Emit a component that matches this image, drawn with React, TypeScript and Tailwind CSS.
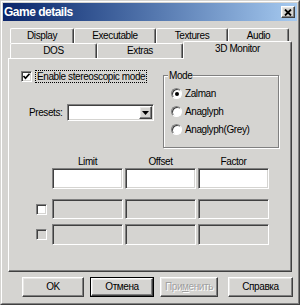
import React from "react";

const BG = "bg-[#d5d4d1]";
const raised =
  "border border-t-white border-l-white border-r-[#404040] border-b-[#404040] shadow-[inset_-1px_-1px_0_#808080,inset_1px_1px_0_#e8e7e5]";
const sunken =
  "border border-t-[#808080] border-l-[#808080] border-r-white border-b-white shadow-[inset_1px_1px_0_#404040,inset_-1px_-1px_0_#d5d4d1]";

function Check({ checked, disabled }: { checked?: boolean; disabled?: boolean }) {
  return (
    <div className={`w-[11px] h-[11px] shrink-0 flex items-center justify-center ${sunken} ${disabled ? BG : "bg-white"}`}>
      {checked && (
        <svg width="9" height="9" viewBox="0 0 9 9">
          <path d="M1.5 4 L3.5 6.2 L7.5 1.8" stroke="black" strokeWidth="1.7" fill="none" />
        </svg>
      )}
    </div>
  );
}

function Radio({ checked, label }: { checked?: boolean; label: string }) {
  return (
    <div className="flex items-center h-[13px]">
      <div className="w-[11px] h-[11px] rounded-full bg-white border border-t-[#808080] border-l-[#808080] border-r-white border-b-white shadow-[inset_1px_1px_0_#404040] flex items-center justify-center">
        {checked && <div className="w-[4px] h-[4px] rounded-full bg-black" />}
      </div>
      <span className="ml-[3px] leading-none">{label}</span>
    </div>
  );
}

function Tab({ label, w, selected }: { label: string; w: string; selected?: boolean }) {
  return (
    <div
      className={`${w} ${selected ? `h-[18px] -mt-[2px] relative z-10 ${BG} pb-[3px]` : "h-[15px]"} rounded-t-[2px] border border-b-0 border-t-white border-l-white border-r-[#404040] shadow-[inset_-1px_0_0_#808080] flex items-center justify-center leading-none`}
    >
      {label}
    </div>
  );
}

function Input({ disabled, h }: { disabled?: boolean; h: string }) {
  return <div className={`w-[71px] ${h} ${sunken} ${disabled ? BG : "bg-white"}`} />;
}

function Button({ label, w, def, disabled }: { label: React.ReactNode; w: string; def?: boolean; disabled?: boolean }) {
  const inner = (
    <div className={`w-full h-full ${raised} flex items-center justify-center leading-none ${disabled ? "text-[#a0a0a0] [text-shadow:1px_1px_0_white]" : ""}`}>
      {label}
    </div>
  );
  return <div className={`${w} h-[20px] ${def ? "border border-black" : ""}`}>{inner}</div>;
}

export default function App() {
  return (
    <div className={`w-[300px] h-[305px] ${BG} text-[10px] tracking-[-0.4px] text-black font-['Liberation_Sans',Arial,sans-serif]`}>
      <div className="w-full h-full border border-t-[#d5d4d1] border-l-[#d5d4d1] border-r-[#404040] border-b-[#404040]">
        <div className="w-full h-full border border-t-white border-l-white border-r-[#808080] border-b-[#808080] p-px flex flex-col">
          {/* Title bar */}
          <div className="h-[18px] shrink-0 flex items-center justify-between bg-gradient-to-r from-[#0a246a] to-[#a6caf0] pl-[1px] pr-[2px]">
            <span className="text-white font-bold text-[12px] tracking-[-0.5px] leading-none">Game details</span>
            <div className={`w-[14px] h-[12px] ${BG} ${raised} flex items-center justify-center`}>
              <svg width="8" height="7" viewBox="0 0 8 7">
                <path d="M1 0.5 L7 6.5 M7 0.5 L1 6.5" stroke="black" strokeWidth="1.8" />
              </svg>
            </div>
          </div>

          {/* Tabs */}
          <div className="mt-[7px] pl-[7px] flex flex-col">
            <div className="flex">
              <Tab label="Display" w="w-[64px]" />
              <Tab label="Executable" w="w-[82px]" />
              <Tab label="Textures" w="w-[72px]" />
              <Tab label="Audio" w="w-[61px]" />
            </div>
            <div className="flex h-[15px] items-start">
              <Tab label="DOS" w="w-[87px]" />
              <Tab label="Extras" w="w-[86px]" />
              <Tab label="3D Monitor" w="w-[109px]" selected />
            </div>
          </div>

          {/* Panel */}
          <div className="ml-[5px] w-[284px] h-[214px] shrink-0 border border-t-white border-l-white border-r-[#404040] border-b-[#404040] shadow-[inset_-1px_-1px_0_#808080] flex flex-col">
            <div className="flex">
              <div className="w-[154px] flex flex-col">
                <div className="mt-[11px] flex items-center h-[13px]">
                  <div className="ml-[12px]">
                    <Check checked />
                  </div>
                  <span className="ml-[3px] h-[13px] px-[1px] border border-dotted border-black flex items-center leading-none whitespace-nowrap">
                    Enable stereoscopic mode
                  </span>
                </div>
                <div className="mt-[21px] flex items-center h-[17px]">
                  <span className="ml-[20px] w-[38px] leading-none">Presets:</span>
                  <div className={`w-[87px] h-[17px] bg-white ${sunken} flex justify-end p-[1px]`}>
                    <div className={`w-[13px] h-full ${BG} ${raised} flex items-center justify-center`}>
                      <svg width="7" height="4" viewBox="0 0 7 4">
                        <path d="M0 0 H7 L3.5 4 Z" fill="black" />
                      </svg>
                    </div>
                  </div>
                </div>
              </div>
              <div className="mt-[16px] w-[116px] h-[73px] relative border border-[#808080] shadow-[inset_1px_1px_0_white,1px_1px_0_white] flex flex-col gap-[5px] pt-[11px] pl-[7px]">
                <span className={`absolute -top-[7px] left-[4px] ${BG} px-[1px] leading-[13px]`}>Mode</span>
                <Radio checked label="Zalman" />
                <Radio label="Anaglyph" />
                <Radio label="Anaglyph(Grey)" />
              </div>
            </div>

            <div className="mt-[7px] ml-[43px] flex gap-[2px] h-[13px] items-center leading-none">
              <span className="w-[71px] text-center">Limit</span>
              <span className="w-[71px] text-center">Offset</span>
              <span className="w-[71px] text-center">Factor</span>
            </div>
            <div className="ml-[43px] flex gap-[2px]">
              <Input h="h-[21px]" />
              <Input h="h-[21px]" />
              <Input h="h-[21px]" />
            </div>
            <div className="mt-[10px] flex items-center">
              <div className="ml-[27px]">
                <Check />
              </div>
              <div className="ml-[5px] flex gap-[2px]">
                <Input h="h-[20px]" disabled />
                <Input h="h-[20px]" disabled />
                <Input h="h-[20px]" disabled />
              </div>
            </div>
            <div className="mt-[5px] flex items-center">
              <div className="ml-[27px]">
                <Check disabled />
              </div>
              <div className="ml-[5px] flex gap-[2px]">
                <Input h="h-[21px]" disabled />
                <Input h="h-[21px]" disabled />
                <Input h="h-[21px]" disabled />
              </div>
            </div>
          </div>

          {/* Buttons */}
          <div className="mt-[5px] flex">
            <div className="ml-[19px]">
              <Button label="OK" w="w-[62px]" />
            </div>
            <div className="ml-[6px]">
              <Button label="Отмена" w="w-[64px]" def />
            </div>
            <div className="ml-[6px]">
              <Button
                label={
                  <span>
                    При<span className="underline">м</span>енить
                  </span>
                }
                w="w-[58px]"
                disabled
              />
            </div>
            <div className="ml-[10px]">
              <Button label="Справка" w="w-[65px]" />
            </div>
          </div>
        </div>
      </div>
    </div>
  );
}
